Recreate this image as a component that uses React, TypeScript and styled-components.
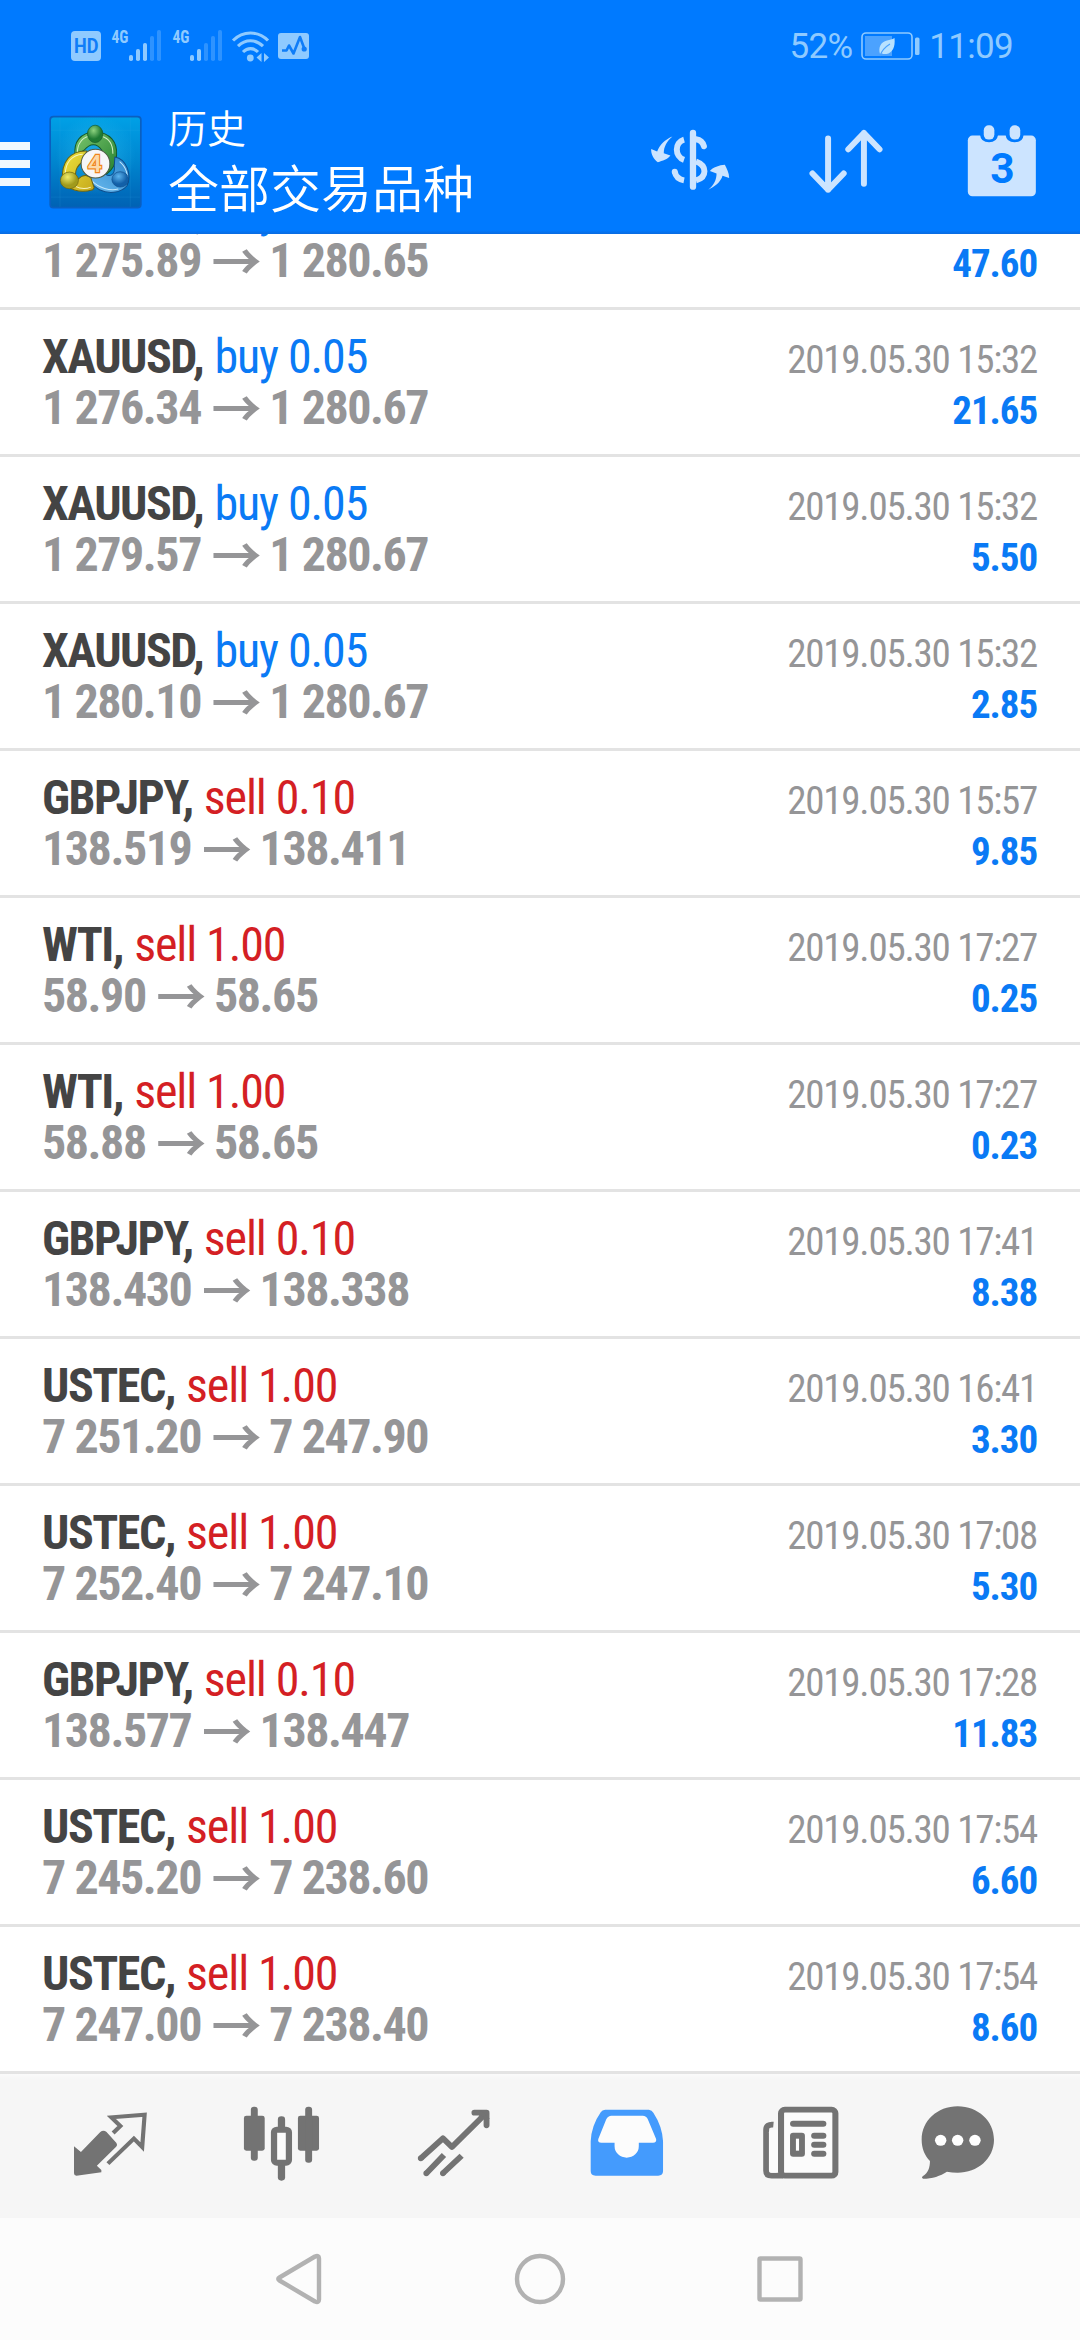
import React from 'react';
import styled, { createGlobalStyle } from 'styled-components';

const condensed = `"Roboto Condensed", Roboto, "Noto Sans CJK SC", sans-serif`;

const GlobalStyle = createGlobalStyle`
  body { margin: 0; background: #fff; }
  * { box-sizing: border-box; }
`;

const Screen = styled.div`
  width: 1080px;
  height: 2340px;
  display: flex;
  flex-direction: column;
  overflow: hidden;
  background: #fff;
  font-family: ${condensed};
`;

/* ---------- header ---------- */

const Header = styled.header`
  height: 234px;
  flex: none;
  display: flex;
  flex-direction: column;
  background: linear-gradient(#007aff 230px, #0a6be0 234px);
`;

const StatusBar = styled.div`
  height: 90px;
  display: flex;
  align-items: center;
  padding: 2px 67px 0 71px;
  color: #8fcaff;
`;

const StatusIcon = styled.svg<{ $gap?: number }>`
  display: block;
  flex: none;
  overflow: visible;
  margin-left: ${p => p.$gap ?? 0}px;
`;

const StatusText = styled.span<{ $gap?: number }>`
  font: 400 35px/40px Roboto, sans-serif;
  letter-spacing: -0.7px;
  margin-left: ${p => p.$gap ?? 0}px;
  margin-top: 1px;
`;

const Spacer = styled.div`
  flex: 1;
`;

const Toolbar = styled.div`
  height: 144px;
  display: flex;
  align-items: center;
  padding-right: 38px;
`;

const MenuButton = styled.div`
  width: 30px;
  height: 44px;
  margin-top: 4px;
  display: flex;
  flex-direction: column;
  justify-content: space-between;
`;

const MenuBar = styled.div`
  height: 8px;
  background: #f0f8ff;
`;

const AppLogo = styled.svg`
  display: block;
  margin-left: 18px;
`;

const Titles = styled.div`
  margin: -8px 0 0 25px;
  color: #fff;
  font-family: "Noto Sans CJK SC DemiLight", "Noto Sans CJK SC", sans-serif;
  font-weight: 350;
`;

const Caption = styled.div`
  font-size: 39px;
  line-height: 56px;
`;

const Title = styled.div`
  font-size: 51px;
  line-height: 64px;
`;

const Actions = styled.div`
  display: flex;
  gap: 76px;
  margin-top: -1px;
  color: #cce4ff;
`;

const ActionIcon = styled.svg`
  display: block;
  width: 80px;
  height: 73px;
`;

/* ---------- history ---------- */

const History = styled.main`
  flex: 1;
  min-height: 0;
  overflow: hidden;
  display: flex;
  flex-direction: column;
  justify-content: flex-end;
`;

const Deal = styled.div`
  height: 147px;
  flex: none;
  padding: 21px 43px 0 42px;
  border-bottom: 3px solid #e3e3e3;
`;

const DealLine = styled.div`
  height: 51px;
  display: flex;
  align-items: baseline;
  justify-content: space-between;
  line-height: 51px;
  white-space: pre;
`;

const Symbol = styled.span`
  font-size: 48px;
  font-weight: 700;
  letter-spacing: -1.5px;
  color: #444;
`;

const Order = styled.span<{ $side: string }>`
  margin-left: 1.5px;
  font-size: 48px;
  font-weight: 400;
  letter-spacing: -1.1px;
  color: ${p => (p.$side === 'buy' ? '#0a7af5' : '#d41f24')};
`;

const Prices = styled.span`
  font-size: 48px;
  font-weight: 700;
  letter-spacing: -1.45px;
  color: #959597;
`;

const Arrow = styled.span`
  margin: 0 -2px 0 1px;
  font-family: "Noto Sans CJK SC", sans-serif;
  font-size: 50px;
  font-weight: 700;
  letter-spacing: 0;
  line-height: 0;
  vertical-align: -2.5px;
`;

const Time = styled.span`
  font-size: 39px;
  letter-spacing: -1.25px;
  color: #959597;
`;

const Profit = styled.span`
  font-size: 39px;
  font-weight: 700;
  letter-spacing: -1.1px;
  color: #0a7af5;
`;

/* ---------- bottom bars ---------- */

const Tabs = styled.nav`
  height: 144px;
  flex: none;
  display: flex;
  gap: 82px;
  padding: 29px 0 0 65px;
  background: linear-gradient(#fafafa, #f6f6f6 5px);
  color: #737373;
`;

const TabIcon = styled.svg<{ $active?: boolean; $shift?: number }>`
  display: block;
  flex: none;
  width: 90px;
  height: 80px;
  overflow: visible;
  margin-left: ${p => p.$shift ?? 0}px;
  color: ${p => (p.$active ? '#449bfd' : 'inherit')};
`;

const SystemNav = styled.div`
  height: 122px;
  flex: none;
  display: flex;
  align-items: center;
  justify-content: center;
  gap: 188px;
  background: #fcfcfc;
  color: #b2b2b2;
`;

const NavIcon = styled.svg`
  display: block;
  width: 52px;
  height: 52px;
  fill: none;
  stroke: currentColor;
  stroke-width: 4.4;
  stroke-linejoin: round;
`;

type DealData = [symbol: string, side: string, volume: string, open: string, close: string, time: string, profit: string];

const deals: DealData[] = [
  ['XAUUSD', 'buy', '0.10', '1 275.89', '1 280.65', '2019.05.30 15:32', '47.60'],
  ['XAUUSD', 'buy', '0.05', '1 276.34', '1 280.67', '2019.05.30 15:32', '21.65'],
  ['XAUUSD', 'buy', '0.05', '1 279.57', '1 280.67', '2019.05.30 15:32', '5.50'],
  ['XAUUSD', 'buy', '0.05', '1 280.10', '1 280.67', '2019.05.30 15:32', '2.85'],
  ['GBPJPY', 'sell', '0.10', '138.519', '138.411', '2019.05.30 15:57', '9.85'],
  ['WTI', 'sell', '1.00', '58.90', '58.65', '2019.05.30 17:27', '0.25'],
  ['WTI', 'sell', '1.00', '58.88', '58.65', '2019.05.30 17:27', '0.23'],
  ['GBPJPY', 'sell', '0.10', '138.430', '138.338', '2019.05.30 17:41', '8.38'],
  ['USTEC', 'sell', '1.00', '7 251.20', '7 247.90', '2019.05.30 16:41', '3.30'],
  ['USTEC', 'sell', '1.00', '7 252.40', '7 247.10', '2019.05.30 17:08', '5.30'],
  ['GBPJPY', 'sell', '0.10', '138.577', '138.447', '2019.05.30 17:28', '11.83'],
  ['USTEC', 'sell', '1.00', '7 245.20', '7 238.60', '2019.05.30 17:54', '6.60'],
  ['USTEC', 'sell', '1.00', '7 247.00', '7 238.40', '2019.05.30 17:54', '8.60'],
];

const DealRow = ({ deal }: { deal: DealData }) => {
  const [symbol, side, volume, open, close, time, profit] = deal;
  return (
    <Deal>
      <DealLine>
        <span>
          <Symbol>{symbol}, </Symbol>
          <Order $side={side}>{side} {volume}</Order>
        </span>
        <Time>{time}</Time>
      </DealLine>
      <DealLine>
        <Prices>{open} <Arrow>→</Arrow> {close}</Prices>
        <Profit>{profit}</Profit>
      </DealLine>
    </Deal>
  );
};

const Signal = ({ level, gap }: { level: number; gap: number }) => (
  <StatusIcon width={49} height={32} viewBox="0 0 49 32" fill="currentColor" $gap={gap}>
    <text x="-0.5" y="13" fontFamily={condensed} fontSize="18" fontWeight="700" textLength="17" lengthAdjust="spacingAndGlyphs">4G</text>
    {[6, 12, 18, 25, 31].map((h, i) => (
      <rect key={h} x={17 + i * 7} y={31 - h} width="4" height={h} rx="1.8" opacity={i < level ? 1 : 0.32} />
    ))}
  </StatusIcon>
);

export default function App() {
  return (
    <Screen>
      <GlobalStyle />
      <Header>
        <StatusBar>
          <StatusIcon width={30} height={30} viewBox="0 0 30 30">
            <rect width="30" height="30" rx="4" fill="#8fcaff" />
            <text x="3" y="22" fontFamily="Roboto, sans-serif" fontSize="20" fontWeight="700" fill="#0f7df8" textLength="24.5" lengthAdjust="spacingAndGlyphs">HD</text>
          </StatusIcon>
          <Signal level={3} gap={11} />
          <Signal level={2} gap={12} />
          <StatusIcon width={37} height={31} viewBox="0 0 37 31" fill="none" stroke="currentColor" strokeWidth="3.1" $gap={10}>
            <path d="M1 9.5C11-0.5 26-0.5 36 9.5M6 15.2C13.5 8 23.5 8 31 15.2M11 21C15.5 16.5 21.5 16.5 26 21" />
            <circle cx="18.3" cy="27" r="3.4" fill="currentColor" stroke="none" />
            <path d="M29.5 22v9l-5-4.5zM32 22l5 4.5-5 4.5z" fill="currentColor" stroke="none" />
          </StatusIcon>
          <StatusIcon width={31} height={26} viewBox="0 0 31 26" $gap={9}>
            <rect width="31" height="26" rx="3" fill="#8fcaff" />
            <path d="M4 17.5h4.5l2.5-5 4.5 8L22 4l4.5 12" fill="none" stroke="#0f7df8" strokeWidth="2.6" strokeLinejoin="round" />
            <circle cx="26.2" cy="16" r="2.6" fill="#0f7df8" />
          </StatusIcon>
          <Spacer />
          <StatusText>52%</StatusText>
          <StatusIcon width={59} height={28} viewBox="0 0 59 28" $gap={9}>
            <rect x="1" y="1" width="50" height="26" rx="4" fill="none" stroke="currentColor" strokeWidth="1.6" />
            <rect x="4" y="4" width="27" height="20" fill="#4ba2ff" />
            <path d="M19 22c-2-7 1-12 7-13.5 3-.8 5-1 7.5-2.5 1 9-2 15-8 16-2 .3-3.5 0-5-.8z" fill="#b9e2ff" />
            <path d="M19 24c1.5-5 5-9 10-12" fill="none" stroke="#4ba2ff" strokeWidth="1.2" />
            <rect x="54" y="5.5" width="4.5" height="17.5" rx="1.5" fill="currentColor" />
          </StatusIcon>
          <StatusText $gap={9}>11:09</StatusText>
        </StatusBar>

        <Toolbar>
          <MenuButton>
            <MenuBar />
            <MenuBar />
            <MenuBar />
          </MenuButton>
          <AppLogo width={95} height={96} viewBox="54 42 284 286">
            <defs>
              <linearGradient id="tile" x1="0" y1="0" x2="0" y2="1">
                <stop offset="0" stopColor="#00a0e6" />
                <stop offset="0.5" stopColor="#0085cf" />
                <stop offset="1" stopColor="#0062b4" />
              </linearGradient>
              <radialGradient id="glow">
                <stop offset="0" stopColor="#36c8f4" stopOpacity="0.5" />
                <stop offset="1" stopColor="#36c8f4" stopOpacity="0" />
              </radialGradient>
              <linearGradient id="green" x1="0" y1="0" x2="1" y2="1">
                <stop offset="0" stopColor="#7cc76e" />
                <stop offset="1" stopColor="#24802f" />
              </linearGradient>
              <linearGradient id="yellow" x1="0" y1="0" x2="1" y2="1">
                <stop offset="0" stopColor="#efe43c" />
                <stop offset="1" stopColor="#c5a81c" />
              </linearGradient>
              <linearGradient id="blue" x1="1" y1="0" x2="0" y2="1">
                <stop offset="0" stopColor="#2c86cb" />
                <stop offset="1" stopColor="#6cbcf0" />
              </linearGradient>
              <radialGradient id="greenHead" cx="0.4" cy="0.3">
                <stop offset="0" stopColor="#8ed37f" />
                <stop offset="1" stopColor="#1f7a33" />
              </radialGradient>
              <radialGradient id="yellowHead" cx="0.4" cy="0.3">
                <stop offset="0" stopColor="#f0ec6a" />
                <stop offset="1" stopColor="#a09a1c" />
              </radialGradient>
              <radialGradient id="blueHead" cx="0.4" cy="0.3">
                <stop offset="0" stopColor="#5db4ee" />
                <stop offset="1" stopColor="#1260a8" />
              </radialGradient>
            </defs>
            <rect x="58" y="47" width="276" height="277" rx="12" fill="#0a5fc0" />
            <rect x="63" y="52" width="266" height="267" rx="8" fill="url(#tile)" />
            <circle cx="196" cy="165" r="120" fill="url(#glow)" />
            <path d="M90 52v267M300 52v267M63 90h266M63 290h266" stroke="#3fb4ec" strokeOpacity="0.2" strokeWidth="2" />
            <g strokeWidth="3" strokeLinejoin="round">
              <path d="M135 165C130 125 150 98 195 94C240 98 262 125 259 165C258 190 248 208 228 222L215 150C200 128 180 128 162 150Z" fill="url(#green)" stroke="#15582a" />
              <path d="M142 160C140 130 158 112 176 108M214 108C236 114 248 134 248 160" fill="none" stroke="#d4efc6" />
              <path d="M254 170C288 176 306 222 290 256C270 280 232 280 208 268C194 260 180 248 172 228L215 212C236 236 256 226 252 196Z" fill="url(#blue)" stroke="#0d4c8c" />
              <path d="M268 184C288 200 296 226 288 246M184 240C206 264 240 272 264 266" fill="none" stroke="#c4e8fc" />
              <path d="M170 152C122 150 92 184 98 240C110 268 150 280 188 268L192 262L182 232C170 222 156 224 144 236L136 222C136 204 146 192 160 182Z" fill="url(#yellow)" stroke="#6d6410" />
              <path d="M158 162C124 164 106 188 106 220M136 258C152 266 168 266 182 260" fill="none" stroke="#f8f3bc" />
            </g>
            <ellipse cx="195" cy="101" rx="23" ry="26" fill="url(#greenHead)" stroke="#15582a" strokeWidth="2" />
            <ellipse cx="118" cy="240" rx="27" ry="25" fill="url(#yellowHead)" stroke="#6d6410" strokeWidth="2" />
            <ellipse cx="270" cy="237" rx="25" ry="23" fill="url(#blueHead)" stroke="#0d4c8c" strokeWidth="2" />
            <circle cx="196" cy="190" r="43" fill="#f6f6f8" stroke="#4c5a44" strokeWidth="3" />
            <text x="194" y="215" textAnchor="middle" fontFamily="Roboto, sans-serif" fontSize="74" fontWeight="500" fill="#fcd9aa" stroke="#f0861c" strokeWidth="7" paintOrder="stroke">4</text>
          </AppLogo>
          <Titles>
            <Caption>历史</Caption>
            <Title>全部交易品种</Title>
          </Titles>
          <Spacer />
          <Actions>
            <ActionIcon viewBox="150 375 240 220" fill="none" stroke="currentColor">
              <path d="M279 399V561" strokeWidth="19" strokeLinecap="round" />
              <path d="M252 419C223 427 223 470 252 480M224 516C227 532 237 539 252 542" strokeWidth="18" />
              <circle cx="224" cy="516" r="9" fill="currentColor" stroke="none" />
              <path d="M288 418C301 420 309 427 312 439" strokeWidth="18" strokeLinecap="round" />
              <path d="M288 485C322 497 322 533 288 542" strokeWidth="18" />
              <path d="M217 410C197 418 179 434 171 455L153 447C152 462 160 477 173 487C187 483 203 479 211 467L191 460C191 440 201 424 217 410Z" fill="currentColor" stroke="none" />
              <path d="M325 570C343 562 362 548 368 528L388 535C388 520 381 506 375 495C359 496 338 503 330 514L350 521C350 540 342 556 325 570Z" fill="currentColor" stroke="none" />
            </ActionIcon>
            <ActionIcon viewBox="618 375 240 220" fill="none" stroke="currentColor" strokeWidth="18" strokeLinecap="round" strokeLinejoin="round">
              <path d="M684 416V570M637 521L684 570L731 521" />
              <path d="M792 552V399M745 448L792 399L839 448" />
            </ActionIcon>
            <ActionIcon viewBox="1086 375 240 220">
              <rect x="1103" y="407" width="205" height="183" rx="14" fill="currentColor" />
              <path d="M1140 400V405Q1142 427 1167 427Q1191 427 1194 405V400ZM1217 400V405Q1219 427 1244 427Q1269 427 1271 405V400Z" fill="#007aff" />
              <rect x="1151" y="376" width="32" height="43" rx="15" fill="currentColor" />
              <rect x="1229" y="376" width="32" height="43" rx="15" fill="currentColor" />
              <text x="1207" y="550" textAnchor="middle" fontFamily="Roboto, sans-serif" fontSize="128" fontWeight="700" fill="#007aff">3</text>
            </ActionIcon>
          </Actions>
        </Toolbar>
      </Header>

      <History>
        {deals.map((deal, i) => (
          <DealRow key={i} deal={deal} />
        ))}
      </History>

      <Tabs>
        <TabIcon viewBox="189 160 260 240" preserveAspectRatio="none" fill="currentColor">
          <path d="M215 290L235 307L291 247Q300 240 309 247L337 279Q342 286 336 292L281 348L294 361V368L222 378Q215 378 215 371Z" />
          <path d="M328 250L349 229L323 203L419 195L412 292L388 267L313 342" fill="none" stroke="currentColor" strokeWidth="12" />
        </TabIcon>
        <TabIcon viewBox="689 160 260 240" preserveAspectRatio="none" fill="currentColor">
          <rect x="709" y="198" width="60" height="105" rx="7" />
          <rect x="729" y="171" width="20" height="162" rx="9" />
          <rect x="865" y="198" width="61" height="105" rx="7" />
          <rect x="886" y="171" width="20" height="168" rx="9" />
          <rect x="807" y="200" width="21" height="60" rx="10" />
          <rect x="807" y="330" width="21" height="63" rx="10" />
          <rect x="796" y="240" width="43" height="99" rx="8" fill="#fbfbfb" stroke="currentColor" strokeWidth="18" />
        </TabIcon>
        <TabIcon viewBox="1187 160 260 240" preserveAspectRatio="none" fill="none" stroke="currentColor" strokeWidth="17">
          <path d="M1221 326L1285 266L1311 292L1408 192" strokeLinejoin="round" />
          <path d="M1221 326h0M1237 371h0M1285 371h0" strokeLinecap="round" />
          <path d="M1376 189H1411V227" strokeLinecap="round" strokeLinejoin="round" />
          <path d="M1396 189L1411 204L1392 204Z" fill="currentColor" strokeWidth="8" />
          <path d="M1237 371L1288 316M1285 371L1339 318" />
        </TabIcon>
        <TabIcon $active viewBox="120 160 260 240" preserveAspectRatio="none" fill="currentColor">
          <path d="M190 180H316Q325 181 329 189Q355 230 357 275V364Q357 378 343 378H162Q148 378 148 364V275Q150 228 177 188Q181 181 190 180Z" />
          <path d="M208 198H298Q309 198 313 209L337 268Q339 279 328 279H287V290A35 34 0 0 1 217 290V279H179Q167 279 170 268L193 209Q198 198 208 198Z" fill="#fcfcfc" />
        </TabIcon>
        <TabIcon viewBox="619 160 260 240" preserveAspectRatio="none" fill="currentColor">
          <path d="M678 225Q657 223 657 240V363Q657 378 673 378H705" fill="none" stroke="currentColor" strokeWidth="17" />
          <rect x="665" y="240" width="28" height="129" rx="8" fill="#fbfbfb" />
          <rect x="700" y="180" width="157" height="198" rx="11" fill="#fbfbfb" stroke="currentColor" strokeWidth="17.5" />
          <rect x="726" y="213" width="105" height="18" rx="9" />
          <rect x="787" y="249" width="44" height="18" rx="9" />
          <rect x="787" y="276" width="44" height="18" rx="9" />
          <rect x="787" y="303" width="44" height="18" rx="9" />
          <rect x="726" y="249" width="43" height="72" rx="9" />
          <rect x="743" y="267" width="9" height="36" fill="#fff" />
        </TabIcon>
        <TabIcon $shift={-12} viewBox="1084 160 260 240" preserveAspectRatio="none" fill="currentColor">
          <path d="M1213 170C1272 170 1318 214 1318 270C1318 327 1270 369 1213 369C1202 369 1192 368 1182 366C1163 379 1140 387 1113 387Q1107 384 1113 379C1128 370 1133 353 1133 334C1118 318 1109 296 1109 270C1109 214 1154 170 1213 170Z" />
          <g fill="#fff">
            <circle cx="1164" cy="272" r="16.5" />
            <circle cx="1213" cy="272" r="16.5" />
            <circle cx="1263" cy="272" r="16.5" />
          </g>
        </TabIcon>
      </Tabs>

      <SystemNav>
        <NavIcon viewBox="0 0 52 52">
          <path d="M5.500 24.500Q3 26 5.500 27.500L41 48.500Q45 50 45 46.500V5.500Q45 2 41 3.500Z" />
        </NavIcon>
        <NavIcon viewBox="0 0 52 52">
          <circle cx="26" cy="26" r="23" />
        </NavIcon>
        <NavIcon viewBox="0 0 52 52">
          <rect x="5.500" y="5.500" width="41" height="41" rx="1" />
        </NavIcon>
      </SystemNav>
    </Screen>
  );
}
